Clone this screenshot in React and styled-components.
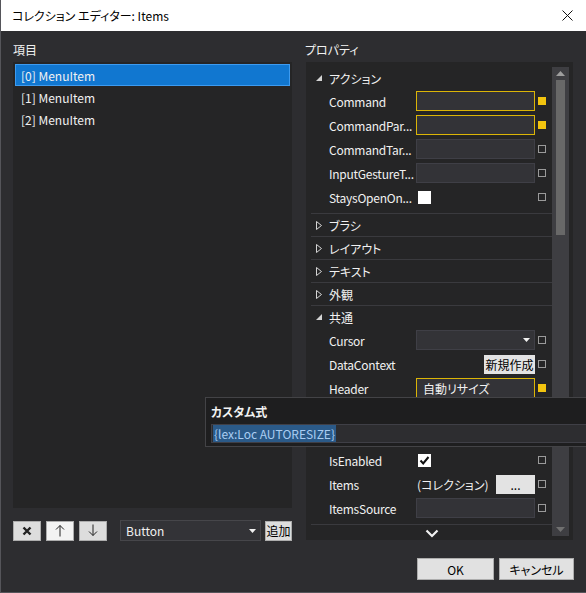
import React from "react";
import styled, { createGlobalStyle } from "styled-components";

const GlobalStyle = createGlobalStyle`
    body {
        margin: 0;
        background: #2d2d30;
        font-family: "Noto Sans CJK JP", "Noto Sans", sans-serif;
        font-size: 12px;
        font-feature-settings: "palt";
    }
`;

const actionProps = [
    { name: "Command", kind: "box", set: true },
    { name: "CommandPar...", kind: "box", set: true },
    { name: "CommandTar...", kind: "box" },
    { name: "InputGestureT...", kind: "box" },
    { name: "StaysOpenOn...", kind: "check" },
];

const commonProps = [
    { name: "Cursor", kind: "combo" },
    { name: "DataContext", kind: "new" },
    { name: "Header", kind: "text", value: "自動リサイズ", set: true },
    { name: "Icon", kind: "box" },
    { name: "IsCheckable", kind: "check" },
    { name: "IsEnabled", kind: "check", checked: true },
    { name: "Items", kind: "collection" },
    { name: "ItemsSource", kind: "box" },
];

const collapsed = ["ブラシ", "レイアウト", "テキスト", "外観"];

const CloseIcon = () => (
    <svg width="11" height="11" viewBox="0 0 11 11">
        <path d="M0.5 0.5 L10.5 10.5 M10.5 0.5 L0.5 10.5" stroke="#111" strokeWidth="1" />
    </svg>
);

const ExpandedArrow = () => (
    <svg width="6" height="6" viewBox="0 0 6 6">
        <polygon points="6,0 6,6 0,6" fill="#d4d4d4" />
    </svg>
);

const CollapsedArrow = () => (
    <svg width="6" height="9" viewBox="0 0 6 9">
        <polygon points="0.5,0.5 5.5,4.5 0.5,8.5" fill="none" stroke="#d4d4d4" strokeWidth="1" />
    </svg>
);

const DropTriangle = () => (
    <svg width="7" height="4" viewBox="0 0 7 4">
        <polygon points="0,0 7,0 3.5,4" fill="#f1f1f1" />
    </svg>
);

const CheckMark = () => (
    <svg width="13" height="13" viewBox="0 0 13 13">
        <path d="M2.5 6.5 L5.2 9.4 L10.5 3" stroke="#111" strokeWidth="2" fill="none" />
    </svg>
);

const PropValue = ({ prop }) => {
    switch (prop.kind) {
        case "check":
            return <CheckBox>{prop.checked && <CheckMark />}</CheckBox>;
        case "combo":
            return (
                <ValueBox>
                    <ComboArrow><DropTriangle /></ComboArrow>
                </ValueBox>
            );
        case "new":
            return <SmallButton $width={51}>新規作成</SmallButton>;
        case "text":
            return <ValueBox $set={prop.set}>{prop.value}</ValueBox>;
        case "collection":
            return (
                <CollectionCell>
                    <span>(コレクション)</span>
                    <SmallButton $width={39}>...</SmallButton>
                </CollectionCell>
            );
        default:
            return <ValueBox $set={prop.set} />;
    }
};

const PropRow = ({ prop }) => (
    <PropRowWrapper>
        <PropName>{prop.name}</PropName>
        <ValueCell>
            <PropValue prop={prop} />
        </ValueCell>
        <Marker $set={prop.set} />
    </PropRowWrapper>
);

const App = () => {
    return (
        <>
            <GlobalStyle />
            <Window>
                <TitleBar>
                    <Title>コレクション エディター: Items</Title>
                    <CloseButton><CloseIcon /></CloseButton>
                </TitleBar>

                <Content>
                    <LeftColumn>
                        <Label>項目</Label>
                        <ListBox>
                            {[0, 1, 2].map((i) => (
                                <ListItem key={i} $selected={i === 0}>[{i}] MenuItem</ListItem>
                            ))}
                        </ListBox>
                        <Toolbar>
                            <ToolButton>
                                <svg width="10" height="10" viewBox="0 0 10 10">
                                    <path d="M1.5 1.5 L8.5 8.5 M8.5 1.5 L1.5 8.5" stroke="#222" strokeWidth="2.4" />
                                </svg>
                            </ToolButton>
                            <ToolButton $light>
                                <svg width="10" height="13" viewBox="0 0 10 13">
                                    <path d="M5 1.5 V12.5 M1 5.5 L5 1.5 L9 5.5" stroke="#222" strokeWidth="1" fill="none" />
                                </svg>
                            </ToolButton>
                            <ToolButton>
                                <svg width="10" height="13" viewBox="0 0 10 13">
                                    <path d="M5 0.5 V11.5 M1 7.5 L5 11.5 L9 7.5" stroke="#222" strokeWidth="1" fill="none" />
                                </svg>
                            </ToolButton>
                            <TypeCombo>
                                Button
                                <DropTriangle />
                            </TypeCombo>
                            <AddButton>追加</AddButton>
                        </Toolbar>
                    </LeftColumn>

                    <RightColumn>
                        <Label>プロパティ</Label>
                        <PropPanel>
                            <PropList>
                                <Group $open>
                                    <GroupHeader>
                                        <ArrowSlot><ExpandedArrow /></ArrowSlot>
                                        アクション
                                    </GroupHeader>
                                    {actionProps.map((p) => <PropRow key={p.name} prop={p} />)}
                                </Group>
                                {collapsed.map((c) => (
                                    <Group key={c}>
                                        <GroupHeader>
                                            <ArrowSlot><CollapsedArrow /></ArrowSlot>
                                            {c}
                                        </GroupHeader>
                                    </Group>
                                ))}
                                <Group $open>
                                    <GroupHeader>
                                        <ArrowSlot><ExpandedArrow /></ArrowSlot>
                                        共通
                                    </GroupHeader>
                                    {commonProps.map((p) => <PropRow key={p.name} prop={p} />)}
                                </Group>
                                <MoreRow>
                                    <svg width="14" height="9" viewBox="0 0 14 9">
                                        <path d="M1.5 1.5 L7 7 L12.5 1.5" stroke="#f1f1f1" strokeWidth="2.2" fill="none" />
                                    </svg>
                                </MoreRow>
                            </PropList>
                            <ScrollBar>
                                <ScrollArrow>
                                    <svg width="9" height="5" viewBox="0 0 9 5">
                                        <polygon points="0,5 9,5 4.5,0" fill="#9e9e9e" />
                                    </svg>
                                </ScrollArrow>
                                <ScrollThumb />
                                <ScrollSpace />
                                <ScrollArrow>
                                    <svg width="9" height="5" viewBox="0 0 9 5">
                                        <polygon points="0,0 9,0 4.5,5" fill="#707070" />
                                    </svg>
                                </ScrollArrow>
                            </ScrollBar>
                        </PropPanel>
                    </RightColumn>
                </Content>

                <Footer>
                    <DialogButton $width={77}>OK</DialogButton>
                    <DialogButton $width={75}>キャンセル</DialogButton>
                </Footer>

                <ExpressionPopup>
                    <PopupTitle>カスタム式</PopupTitle>
                    <ExpressionInput>
                        <Selection>{"{lex:Loc AUTORESIZE}"}</Selection>
                    </ExpressionInput>
                </ExpressionPopup>
            </Window>
        </>
    );
};

const Window = styled.div`
    position: relative;
    width: 585px;
    height: 592px;
    background: #2d2d30;
    border-left: 1px solid #55555a;
    border-bottom: 1px solid #55555a;
    display: flex;
    flex-direction: column;
    overflow: hidden;
    color: #f1f1f1;
`;

const TitleBar = styled.div`
    height: 31px;
    flex: none;
    background: #ffffff;
    display: flex;
    align-items: center;
    justify-content: space-between;
    padding: 0 9px 0 11px;
`;

const Title = styled.div`
    color: #000;
    font-size: 12px;
`;

const CloseButton = styled.div`
    width: 16px;
    display: flex;
    align-items: center;
    justify-content: center;
    margin-right: 2px;
`;

const Content = styled.div`
    display: flex;
    gap: 13px;
    padding: 9px 0 0 12px;
`;

const LeftColumn = styled.div`
    width: 279px;
    display: flex;
    flex-direction: column;
`;

const RightColumn = styled.div`
    width: 268px;
    display: flex;
    flex-direction: column;
`;

const Label = styled.div`
    height: 20px;
    line-height: 20px;
    margin-bottom: 2px;
    font-size: 12px;
    color: #f1f1f1;
`;

const ListBox = styled.div`
    height: 446px;
    background: #252526;
    padding: 2px;
    box-sizing: border-box;
`;

const ListItem = styled.div`
    height: 22px;
    box-sizing: border-box;
    display: flex;
    align-items: center;
    padding-left: 5px;
    background: ${(p) => (p.$selected ? "#1177d0" : "transparent")};
    border: 1px solid ${(p) => (p.$selected ? "#3d9bf0" : "transparent")};
    color: #f1f1f1;
`;

const Toolbar = styled.div`
    display: flex;
    align-items: center;
    gap: 5px;
    margin-top: 12px;
    height: 21px;
`;

const ToolButton = styled.div`
    width: 28px;
    height: 20px;
    box-sizing: border-box;
    background: ${(p) => (p.$light ? "#f3f3f3" : "#dddddd")};
    border: 1px solid #adadad;
    display: flex;
    align-items: center;
    justify-content: center;
`;

const TypeCombo = styled.div`
    margin-left: 8px;
    width: 141px;
    height: 21px;
    box-sizing: border-box;
    background: #333337;
    border: 1px solid #46464a;
    display: flex;
    align-items: center;
    justify-content: space-between;
    padding: 0 4px 0 5px;
    color: #f1f1f1;
`;

const AddButton = styled.div`
    margin-left: -1px;
    width: 27px;
    height: 20px;
    box-sizing: border-box;
    background: #dddddd;
    border: 1px solid #adadad;
    color: #000;
    display: flex;
    align-items: center;
    justify-content: center;
    font-size: 12px;
    white-space: nowrap;
`;

const PropPanel = styled.div`
    margin-left: 1px;
    height: 478px;
    box-sizing: border-box;
    background: #252526;
    padding: 5px 4px 0 5px;
    display: flex;
`;

const PropList = styled.div`
    flex: 1;
    overflow: hidden;
`;

const Group = styled.div`
    border-bottom: 1px solid #3a3a3e;
    padding-bottom: ${(p) => (p.$open ? "4px" : "0")};
`;

const GroupHeader = styled.div`
    height: 22px;
    display: flex;
    align-items: center;
    padding-left: 5px;
    color: #f1f1f1;
`;

const ArrowSlot = styled.span`
    width: 13px;
    display: flex;
    align-items: center;
`;

const PropRowWrapper = styled.div`
    height: 24px;
    display: grid;
    grid-template-columns: 87px 119px 16px;
    align-items: center;
    padding-left: 18px;
`;

const PropName = styled.div`
    white-space: nowrap;
    overflow: hidden;
    letter-spacing: -0.25px;
    color: #f1f1f1;
`;

const ValueCell = styled.div`
    height: 20px;
    display: flex;
    align-items: center;
`;

const ValueBox = styled.div`
    position: relative;
    width: 100%;
    height: 20px;
    box-sizing: border-box;
    background: #333337;
    border: 1px solid ${(p) => (p.$set ? "#dbb507" : "#3f3f46")};
    padding-left: 6px;
    display: flex;
    align-items: center;
    color: #f1f1f1;
`;

const ComboArrow = styled.span`
    margin-left: auto;
    margin-right: 4px;
    display: flex;
`;

const CheckBox = styled.div`
    margin-left: 2px;
    width: 13px;
    height: 13px;
    background: #ffffff;
    display: flex;
`;

const SmallButton = styled.div`
    margin-left: auto;
    width: ${(p) => p.$width}px;
    height: 19px;
    box-sizing: border-box;
    background: #e3e3e3;
    color: #000;
    display: flex;
    align-items: center;
    justify-content: center;
    font-size: 12px;
    white-space: nowrap;
    overflow: hidden;
`;

const CollectionCell = styled.div`
    width: 100%;
    display: flex;
    align-items: center;
    padding-left: 1px;
    color: #f1f1f1;
    white-space: nowrap;
`;

const Marker = styled.div`
    margin-left: 3px;
    width: 8px;
    height: 8px;
    box-sizing: border-box;
    background: ${(p) => (p.$set ? "#f2c40f" : "transparent")};
    border: 1px solid ${(p) => (p.$set ? "#f2c40f" : "#9a9a9a")};
`;

const MoreRow = styled.div`
    height: 16px;
    display: flex;
    align-items: center;
    justify-content: center;
`;

const ScrollBar = styled.div`
    width: 17px;
    margin-bottom: 4px;
    background: #3e3e42;
    display: flex;
    flex-direction: column;
    align-items: center;
`;

const ScrollArrow = styled.div`
    height: 13px;
    display: flex;
    align-items: center;
    justify-content: center;
`;

const ScrollThumb = styled.div`
    width: 9px;
    height: 155px;
    background: #686868;
`;

const ScrollSpace = styled.div`
    flex: 1;
`;

const Footer = styled.div`
    display: flex;
    justify-content: flex-end;
    gap: 5px;
    padding: 17px 12px 0 0;
`;

const DialogButton = styled.div`
    width: ${(p) => p.$width}px;
    height: 22px;
    box-sizing: border-box;
    background: #e1e1e1;
    border: 1px solid #adadad;
    color: #000;
    display: flex;
    align-items: center;
    justify-content: center;
    font-size: 12px;
`;

const ExpressionPopup = styled.div`
    position: absolute;
    left: 204px;
    top: 397px;
    width: 400px;
    height: 50px;
    box-sizing: border-box;
    background: #1e1e1f;
    border: 1px solid #434346;
    padding: 4px 0 0 5px;
    z-index: 2;
`;

const PopupTitle = styled.div`
    height: 19px;
    line-height: 19px;
    font-weight: bold;
    color: #f1f1f1;
    font-size: 12px;
`;

const ExpressionInput = styled.div`
    margin-top: 3px;
    height: 19px;
    box-sizing: border-box;
    background: #2d2d30;
    border: 1px solid #3f3f46;
    padding-left: 1px;
    display: flex;
    align-items: center;
`;

const Selection = styled.span`
    background: #2b5a88;
    color: #a9cdf2;
    line-height: 17px;
    padding: 0 1px;
`;

export default App;
